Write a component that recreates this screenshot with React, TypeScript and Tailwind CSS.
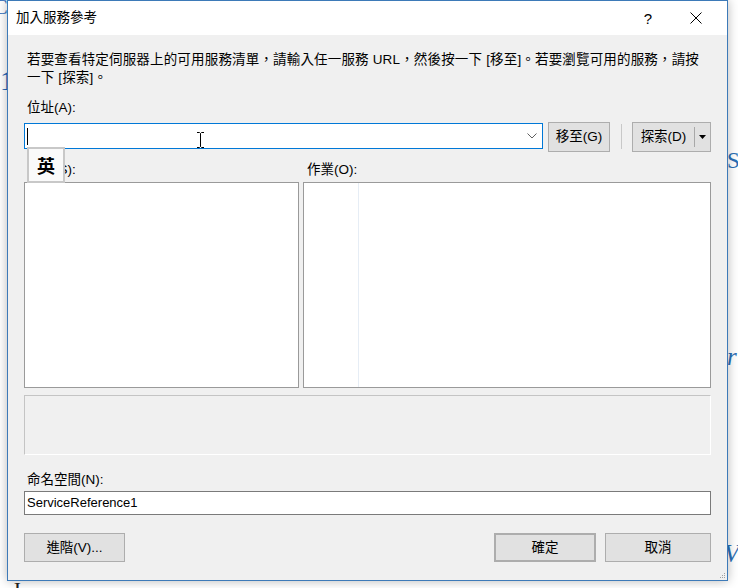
import React from "react";

function Btn({ children, className = "" }: { children: React.ReactNode; className?: string }) {
  return (
    <div
      className={`flex items-center justify-center bg-[#e1e1e1] border border-[#adadad] leading-[18px] ${className}`}
    >
      {children}
    </div>
  );
}

export default function App() {
  return (
    <div className="relative w-[738px] h-[588px] overflow-hidden bg-white text-[13.5px] text-black [font-family:'Liberation_Sans','Noto_Sans_CJK_TC',sans-serif]">
      {/* editor text peeking from behind the window */}
      <span className="absolute left-[-7px] top-[-4px] text-[22px] leading-none text-[#2366b8] [font-family:'Liberation_Serif',serif]">C</span>
      <span className="absolute left-[0px] top-[67px] text-[28px] leading-none text-[#2366b8] [font-family:'Liberation_Serif',serif]">1</span>
      <span className="absolute left-[727px] top-[149px] text-[23px] leading-none text-[#2b6fb5] [font-family:'Liberation_Serif',serif]">S</span>
      <span className="absolute left-[727px] top-[344px] text-[25px] italic leading-none text-[#2b6fb5] [font-family:'Liberation_Serif',serif]">r</span>
      <span className="absolute left-[724px] top-[541px] text-[25px] italic leading-none text-[#2b6fb5] [font-family:'Liberation_Serif',serif]">Vc</span>
      <span className="absolute left-[12px] top-[579px] text-[22px] leading-none text-[#222] [font-family:'Liberation_Serif',serif]">J</span>

      {/* dialog window */}
      <div className="absolute left-[7px] top-0 w-[721px] h-[581px] border border-[#3d7ab8] bg-[#f0f0f0] flex flex-col shadow-[0_0_10px_rgba(0,0,0,0.28)]">
        {/* title bar */}
        <div className="h-[34px] shrink-0 bg-white flex items-center">
          <span className="ml-[8px] leading-[18px] text-[13.5px]">加入服務參考</span>
          <div className="ml-auto w-[48px] h-full flex items-center justify-center text-[15px] leading-none [font-family:'Liberation_Sans',sans-serif]">?</div>
          <div className="w-[48px] h-full mr-[7px] flex items-center justify-center">
            <svg width="12" height="12" viewBox="0 0 12 12">
              <path d="M0.5 0.5 L11.5 11.5 M11.5 0.5 L0.5 11.5" stroke="#000" strokeWidth="1" fill="none" />
            </svg>
          </div>
        </div>

        {/* body */}
        <div className="relative flex-1 flex flex-col px-[16px] pt-[16px]">
          <p className="ml-[3px] leading-[18px] whitespace-nowrap tracking-[0.17px]">
            若要查看特定伺服器上的可用服務清單，請輸入任一服務 URL，然後按一下 [移至]。若要瀏覽可用的服務，請按
            <br />
            一下 [探索]。
          </p>

          <div className="ml-[3px] mt-[12px] leading-[18px]">位址(A):</div>

          <div className="mt-[5px] flex items-start">
            <div className="relative flex-1 h-[26px] mt-[1px] bg-white border border-[#0078d7] flex items-center">
              <div className="ml-[2px] w-px h-[17px] bg-black" />
              <svg className="absolute right-[5px] top-[9px]" width="10" height="6" viewBox="0 0 10 6">
                <path d="M0.5 0.5 L5 5 L9.5 0.5" stroke="#606060" strokeWidth="1" fill="none" />
              </svg>
            </div>
            <Btn className="ml-[5px] w-[62px] h-[30px]">移至(G)</Btn>
            <div className="ml-[11px] mt-[2px] w-px h-[25px] bg-[#c8c8c8]" />
            <div className="ml-[10px] w-[79px] h-[30px] bg-[#e1e1e1] border border-[#adadad] flex items-stretch">
              <div className="w-[61px] flex items-center justify-center leading-[18px]">探索(D)</div>
              <div className="my-[4px] w-px bg-[#a8a8a8]" />
              <div className="flex-1 flex items-center justify-center">
                <svg width="7" height="4" viewBox="0 0 7 4">
                  <path d="M0 0 L7 0 L3.5 4 Z" fill="#000" />
                </svg>
              </div>
            </div>
          </div>

          <div className="mt-[9px] flex">
            <div className="w-[275px] pl-[3px] leading-[18px]">服務(S):</div>
            <div className="ml-[4px] pl-[4px] leading-[18px]">作業(O):</div>
          </div>

          <div className="mt-[3px] flex h-[206px]">
            <div className="w-[275px] bg-white border border-[#9a9a9a]" />
            <div className="ml-[4px] flex-1 bg-white border border-[#9a9a9a] flex">
              <div className="w-[55px] border-r border-[#e6edf5]" />
            </div>
          </div>

          <div className="mt-[7px] h-[60px] border-t border-l border-[#c4c4c4] border-r border-b border-r-white border-b-white" />

          <div className="ml-[3px] mt-[16px] leading-[18px]">命名空間(N):</div>

          <div className="mt-[2px] h-[24px] bg-white border border-[#7a7a7a] flex items-center pl-[2px] text-[13px]">
            ServiceReference1
          </div>

          <div className="mt-[18px] flex">
            <Btn className="w-[101px] h-[29px]">進階(V)...</Btn>
            <Btn className="ml-auto w-[102px] h-[29px] border-2 border-[#0078d7]">確定</Btn>
            <Btn className="ml-[9px] w-[106px] h-[29px]">取消</Btn>
          </div>

          {/* IME indicator overlay */}
          <div className="absolute left-[19px] top-[112px] w-[38px] h-[36px] bg-[#fafafa] border-2 border-[#c8c8c8] flex items-center justify-center text-[18px] font-bold leading-none [font-family:'Noto_Sans_CJK_TC',sans-serif]">
            英
          </div>

          {/* mouse I-beam cursor */}
          <svg className="absolute left-[188px] top-[97px]" width="9" height="16" viewBox="0 0 9 16">
            <path d="M1 0.5 H3.5 L4.5 1.5 L5.5 0.5 H8 M4.5 1.5 V14.5 M1 15.5 H3.5 L4.5 14.5 L5.5 15.5 H8" stroke="#000" strokeWidth="1" fill="none" />
          </svg>

          {/* resize grip */}
          <svg className="absolute right-[1px] bottom-[1px]" width="8" height="8" viewBox="0 0 8 8">
            <rect x="6" y="2" width="1" height="1" fill="#a0a0a0" />
            <rect x="4" y="4" width="1" height="1" fill="#a0a0a0" />
            <rect x="6" y="4" width="1" height="1" fill="#a0a0a0" />
            <rect x="2" y="6" width="1" height="1" fill="#a0a0a0" />
            <rect x="4" y="6" width="1" height="1" fill="#a0a0a0" />
            <rect x="6" y="6" width="1" height="1" fill="#a0a0a0" />
          </svg>
        </div>
      </div>
    </div>
  );
}
